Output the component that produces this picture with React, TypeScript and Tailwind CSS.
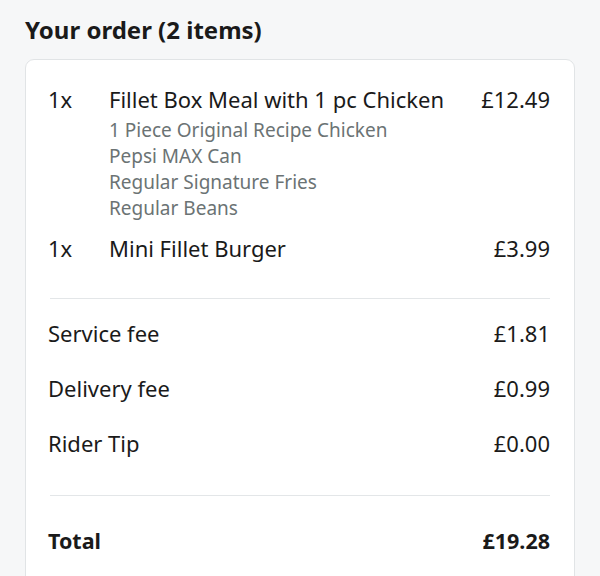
import React from 'react';

interface OrderItem {
  qty: number;
  name: string;
  price: string;
  options?: string[];
}

const items: OrderItem[] = [
  {
    qty: 1,
    name: 'Fillet Box Meal with 1 pc Chicken',
    price: '£12.49',
    options: ['1 Piece Original Recipe Chicken', 'Pepsi MAX Can', 'Regular Signature Fries', 'Regular Beans'],
  },
  { qty: 1, name: 'Mini Fillet Burger', price: '£3.99' },
];

const fees = [
  { label: 'Service fee', amount: '£1.81' },
  { label: 'Delivery fee', amount: '£0.99' },
  { label: 'Rider Tip', amount: '£0.00' },
];

const App: React.FC = () => {
  return (
    <div className="min-h-[576px] bg-[#f6f7f8] px-[25px] pt-[14px] font-['Noto_Sans',sans-serif] text-[#1a1a1a]">
      <h2 className="text-[24px] font-bold leading-[32px]">Your order (2 items)</h2>

      <div className="mt-[13px] rounded-[9px] border border-[#e1e4e6] bg-white pl-[22px] pr-[24px] pt-[25px] pb-[40px]">
        {/* Items */}
        <div className="flex flex-col gap-[13px]">
          {items.map((item) => (
            <div key={item.name} className="flex">
              <span className="w-[61px] shrink-0 text-[22px] leading-[28px]">{item.qty}x</span>
              <div className="flex-1">
                <p className="text-[22px] leading-[28px]">{item.name}</p>
                {item.options && (
                  <ul className="mt-[4px] text-[19px] leading-[26px] text-[#6b7374]">
                    {item.options.map((o) => (
                      <li key={o}>{o}</li>
                    ))}
                  </ul>
                )}
              </div>
              <span className="text-[22px] leading-[28px]">{item.price}</span>
            </div>
          ))}
        </div>

        <div className="ml-[2px] mt-[36px] h-px bg-[#e3e6e8]" />

        {/* Fees */}
        <div className="mt-[20px] flex flex-col gap-[27px]">
          {fees.map((f) => (
            <div key={f.label} className="flex justify-between text-[22px] leading-[28px]">
              <span>{f.label}</span>
              <span>{f.amount}</span>
            </div>
          ))}
        </div>

        <div className="ml-[2px] mt-[38px] h-px bg-[#e3e6e8]" />

        <div className="mt-[31px] flex justify-between text-[21.5px] font-bold leading-[28px]">
          <span>Total</span>
          <span>£19.28</span>
        </div>
      </div>
    </div>
  );
};

export default App;
